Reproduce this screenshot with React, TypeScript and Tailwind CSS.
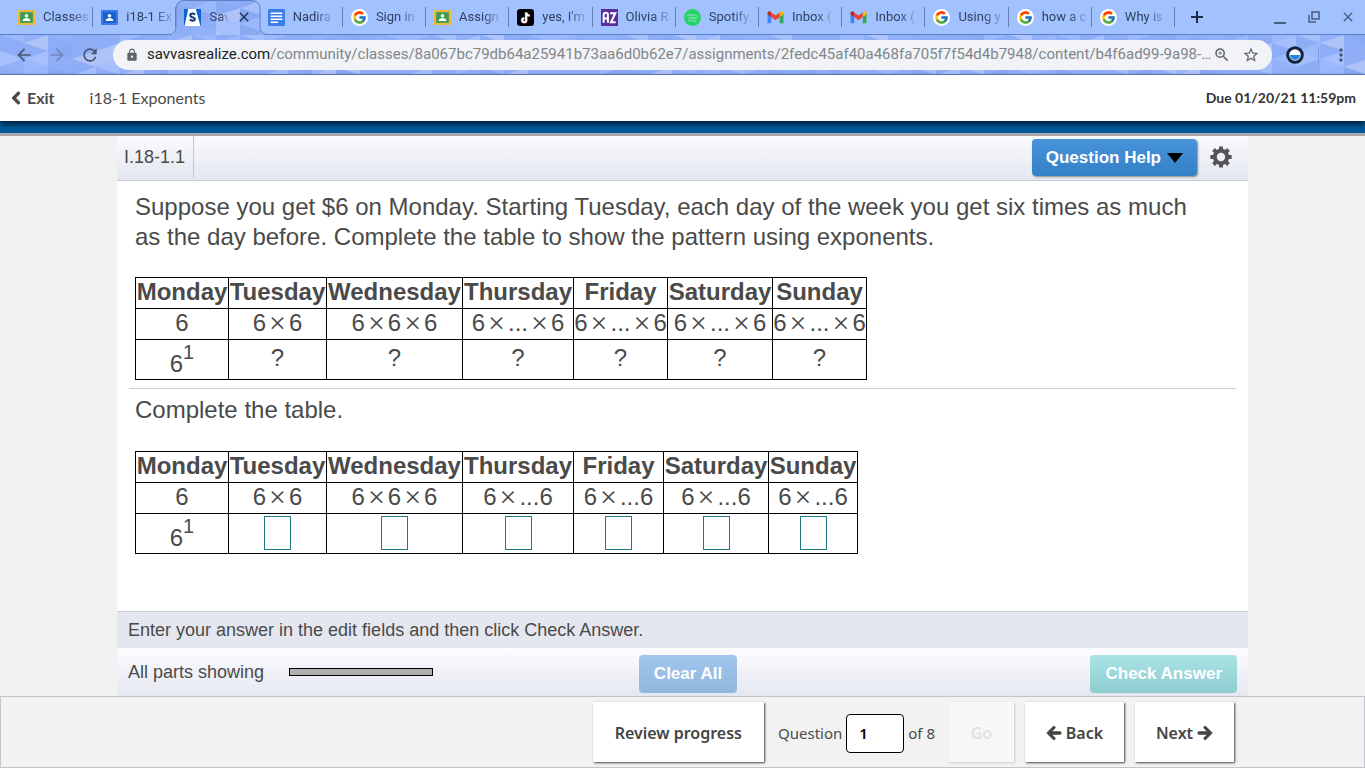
// src/App.tsx
import React from "react";
import { FaArrowLeft, FaArrowRight, FaChevronLeft } from "react-icons/fa";
import { FcGoogle } from "react-icons/fc";
import {
  MdArrowBack,
  MdArrowForward,
  MdClose,
  MdLock,
  MdMoreVert,
  MdOutlineZoomIn,
  MdRefresh,
  MdStarBorder,
} from "react-icons/md";

type Kind = "classroom" | "roster" | "savvas" | "docs" | "google" | "tiktok" | "az" | "spotify" | "gmail";

const TABS: { kind: Kind; title: string; active?: boolean }[] = [
  { kind: "classroom", title: "Classes" },
  { kind: "roster", title: "i18-1 Ex" },
  { kind: "savvas", title: "Sav", active: true },
  { kind: "docs", title: "Nadira" },
  { kind: "google", title: "Sign in" },
  { kind: "classroom", title: "Assign" },
  { kind: "tiktok", title: "yes, I'm" },
  { kind: "az", title: "Olivia R" },
  { kind: "spotify", title: "Spotify" },
  { kind: "gmail", title: "Inbox (" },
  { kind: "gmail", title: "Inbox (" },
  { kind: "google", title: "Using y" },
  { kind: "google", title: "how a c" },
  { kind: "google", title: "Why is" },
];

const DAYS = ["Monday", "Tuesday", "Wednesday", "Thursday", "Friday", "Saturday", "Sunday"];

// Favicons, all on a 16x16 grid
function Favicon({ kind }: { kind: Kind }) {
  if (kind === "google") {
    return (
      <span className="flex size-[17px] shrink-0 items-center justify-center rounded-full bg-white">
        <FcGoogle className="size-[15px]" />
      </span>
    );
  }
  return (
    <svg viewBox="0 0 16 16" className="size-[17px] shrink-0" aria-hidden="true">
      {(kind === "classroom" || kind === "roster") && (
        <>
          <rect y="1" width="16" height="14" rx="1" fill={kind === "roster" ? "#3b7be6" : "#e9ba3a"} />
          <rect x="2" y="3" width="12" height="10" fill={kind === "roster" ? "#1b5fd0" : "#3f9a56"} />
          <circle cx="8" cy="6.4" r="1.7" fill="#fff" />
          <path d="M4.4 11.2c0-1.9 1.8-2.7 3.6-2.7s3.6.8 3.6 2.7z" fill="#fff" />
        </>
      )}
      {kind === "savvas" && (
        <>
          <path d="M0 0h16v16H0z" fill="#0a64d2" />
          <path d="M4 0h7l4.500 16H.5z" fill="#fff" />
          <path
            d="M10.400 5.200C9.600 4.500 8.500 4.200 7.600 4.300 5.300 4.500 5.200 6.900 7.300 7.500c2.300.6 3.200.9 2.900 2.300-.4 1.500-3.200 1.500-4.700.1"
            fill="none"
            stroke="#14387f"
            strokeWidth="2"
          />
        </>
      )}
      {kind === "docs" && (
        <>
          <rect width="16" height="16" rx="1.500" fill="#3c7de8" />
          <path d="M2.500 4h11M2.500 6.800h11M2.500 9.600h11M2.500 12.400h7" stroke="#fff" strokeWidth="1.500" />
        </>
      )}
      {kind === "tiktok" && (
        <>
          <rect width="16" height="16" rx="3" fill="#000" />
          <path
            d="M8.200 3v7.400a1.900 1.900 0 1 1-1.900-1.900M8.200 3.200c.3 1.800 1.500 2.700 3.200 2.800"
            fill="none"
            stroke="#25f4ee"
            strokeWidth="1.700"
          />
          <path
            d="M9.200 3.500v7.400A1.900 1.900 0 1 1 7.300 9M9.200 3.700c.3 1.800 1.500 2.700 3.200 2.800"
            fill="none"
            stroke="#fe2c55"
            strokeWidth="1.700"
          />
          <path
            d="M8.700 3.200v7.400a1.900 1.900 0 1 1-1.900-1.900M8.700 3.400c.3 1.800 1.500 2.700 3.200 2.800"
            fill="none"
            stroke="#fff"
            strokeWidth="1.700"
          />
        </>
      )}
      {kind === "az" && (
        <>
          <rect width="16" height="16" fill="#5b2d9c" />
          <path
            d="M2.500 13V5.500q0-2 2-2t2 2V13M2.500 9h4M8.500 4h5L9.400 12.500h4.400"
            fill="none"
            stroke="#fff"
            strokeWidth="1.900"
          />
        </>
      )}
      {kind === "spotify" && (
        <>
          <circle cx="8" cy="8" r="8" fill="#25d366" />
          <path
            d="M3.500 6c3-.9 6.300-.6 9 .8M4 8.600c2.600-.7 5.200-.4 7.600.8M4.500 11c2.200-.5 4.200-.3 6.200.8"
            fill="none"
            stroke="#7fdcae"
            strokeWidth="1.300"
            strokeLinecap="round"
          />
        </>
      )}
      {kind === "gmail" && (
        <>
          <path d="M.5 4v9.500H4V6z" fill="#4285f4" />
          <path d="M15.500 4v9.500H12V6z" fill="#34a853" />
          <path d="M12 3.500v4l3.500-2.600V4c0-1.700-1.800-2.300-2.800-1.400z" fill="#fbbc04" />
          <path d="M.5 4.900V4C.5 2.300 2.300 1.700 3.300 2.600L4 3.200v4.300z" fill="#c5221f" />
          <path d="M4 3.200l4 3 4-3v4.300l-4 3-4-3z" fill="#ea4335" />
        </>
      )}
    </svg>
  );
}

const SHADES = ["#8faef6", "#9bb8fd", "#8aa9f3", "#a6bffd", "#93b1f9", "#b0c3f9", "#8daef6"];

// Triangle mosaic of the browser theme
function Mosaic({ seed = 0 }: { seed?: number }) {
  const shapes: React.ReactNode[] = [];
  for (let c = 0; c < 62; c++) {
    for (let r = -1; r < 4; r++) {
      const x = c * 24;
      const y = r * 16 + (c % 2) * 8;
      const k = (c * 7 + r * 11 + seed + ((c * r * 5) % 6) + 20) % SHADES.length;
      const j = (c * 3 + r * 5 + seed + ((c * c) % 5) + 20) % SHADES.length;
      shapes.push(
        <path key={`a${c}.${r}`} d={`M${x} ${y}l24 8l-24 8z`} fill={SHADES[k]} />,
        <path key={`b${c}.${r}`} d={`M${x + 24} ${y + 8}v16l-24-8z`} fill={SHADES[j]} />,
      );
    }
  }
  return <>{shapes}</>;
}

function Tab({ kind, title, active }: { kind: Kind; title: string; active?: boolean }) {
  return (
    <div className="relative flex h-[34px] min-w-0 flex-1 items-center gap-2 pl-2 pr-1">
      {active && (
        <svg viewBox="0 0 101 35" className="absolute -left-2 top-0 z-10 h-[35px] w-[101px]" aria-hidden="true">
          <defs>
            <clipPath id="tab-shape">
              <path d="M0 35C5 35 8 32 8 26V9Q8 0 17 0H83Q92 0 92 9V26C92 32 95 35 101 35z" />
            </clipPath>
          </defs>
          <g clipPath="url(#tab-shape)">
            <Mosaic seed={3} />
          </g>
          <path
            d="M0 34.500C5 34.500 8 32 8 26V9Q8 .5 17 .5H83Q92 .5 92 9V26C92 32 95 34.500 101 34.500"
            fill="none"
            stroke="#5c7fc9"
          />
        </svg>
      )}
      <span className="relative z-20 flex shrink-0">
        <Favicon kind={kind} />
      </span>
      <a
        href="#"
        className="relative z-20 min-w-0 whitespace-nowrap text-[13px] text-[#30415f] [mask-image:linear-gradient(to_right,black_60%,transparent_110%)]"
      >
        {title}
      </a>
      {active ? (
        <button aria-label="Close tab" className="relative z-20 ml-auto mr-1 shrink-0 text-[#1f2c46]">
          <MdClose className="size-4" />
        </button>
      ) : (
        <span className="absolute right-0 top-[7px] h-5 w-px bg-[#667fb3]" />
      )}
    </div>
  );
}

function BrowserChrome() {
  return (
    <div className="font-[Roboto,sans-serif]">
      <div className="flex h-[34px] bg-[#a2c2ff]">
        <div className="flex min-w-0 flex-1 pl-[10px]">
          {TABS.map((t, i) => (
            <Tab key={i} {...t} />
          ))}
        </div>
        <div className="flex w-[190px] items-center justify-between pl-3 pr-[9px] text-[#4b5c80]">
          <button aria-label="New tab" className="text-[#1f2c46]">
            <svg viewBox="0 0 20 20" className="size-5" stroke="currentColor" strokeWidth="2">
              <path d="M10 4v12M4 10h12" />
            </svg>
          </button>
          <div className="flex items-center gap-[18px]">
            <button aria-label="Minimize">
              <svg viewBox="0 0 16 16" className="size-4" stroke="currentColor" strokeWidth="2">
                <path d="M2 14h12" />
              </svg>
            </button>
            <button aria-label="Restore">
              <svg viewBox="0 0 16 16" className="size-4" fill="none" stroke="currentColor" strokeWidth="1.500">
                <path d="M6 3h7v7H6zM3 6v7h7" />
              </svg>
            </button>
            <button aria-label="Close window">
              <MdClose className="size-4" />
            </button>
          </div>
        </div>
      </div>
      <div className="relative h-[41px] overflow-hidden border-y border-[#5c7fc9] bg-[#8fadf7]">
        <svg
          viewBox="0 0 1365 40"
          preserveAspectRatio="xMinYMin slice"
          className="absolute inset-0 size-full"
          aria-hidden="true"
        >
          <Mosaic />
        </svg>
        <div className="relative flex h-full items-center text-[#4a5673]">
          <div className="flex items-center gap-[13px] pl-[14px]">
            <button aria-label="Back">
              <MdArrowBack className="size-5" />
            </button>
            <button aria-label="Forward" className="text-[#7188bd]">
              <MdArrowForward className="size-5" />
            </button>
            <button aria-label="Reload">
              <MdRefresh className="size-5" />
            </button>
          </div>
          <div className="ml-[13px] flex h-[30px] min-w-0 flex-1 items-center rounded-full bg-[#f1f3f6] px-3 text-[#5f6368]">
            <MdLock className="size-[14px] shrink-0" />
            <div className="ml-2 min-w-0 flex-1 whitespace-nowrap text-[15px] text-[#80868b]">
              <span className="text-[#202124]">savvasrealize.com</span>
              /community/classes/8a067bc79db64a25941b73aa6d0b62e7/assignments/2fedc45af40a468fa705f7f54d4b7948/content/b4f6ad99-9a98-…
            </div>
            <button aria-label="Zoom">
              <MdOutlineZoomIn className="size-[18px]" />
            </button>
            <button aria-label="Bookmark" className="ml-[11px]">
              <MdStarBorder className="size-[18px]" />
            </button>
          </div>
          <div className="flex w-[93px] items-center pl-[14px]">
            <svg viewBox="0 0 18 18" className="size-[18px]" aria-hidden="true">
              <circle cx="9" cy="9" r="7.300" fill="#fff" stroke="#10233f" strokeWidth="3" />
              <path d="M4 9h10a5 5 0 0 1-10 0z" fill="#1e88e5" />
            </svg>
            <span className="ml-[14px] h-4 w-px bg-[#7f9be0]" />
            <button aria-label="Menu" className="ml-[12px]">
              <MdMoreVert className="size-5" />
            </button>
          </div>
        </div>
      </div>
    </div>
  );
}

function Gear() {
  return (
    <svg viewBox="0 0 22 22" className="size-[22px]" fill="none" stroke="currentColor" aria-hidden="true">
      <circle cx="11" cy="11" r="6.200" strokeWidth="4" />
      {[0, 45, 90, 135].map((a) => (
        <path key={a} d="M11 .4v3.800M11 17.800v3.800" strokeWidth="4" transform={`rotate(${a} 11 11)`} />
      ))}
    </svg>
  );
}

function Times() {
  return <span className="px-[3px] align-[-2px] font-['Liberation_Serif',serif] text-[30px] leading-[0]">×</span>;
}

const cell = "h-[31px] border border-black p-0 pb-0.5 text-center leading-[28px] whitespace-nowrap";

// cells come as strings, "x" stands for the multiplication sign
function Product({ parts }: { parts: string }) {
  return (
    <>
      {parts.split(" ").map((p, i) => (p === "x" ? <Times key={i} /> : <span key={i}>{p}</span>))}
    </>
  );
}

function DaysTable({
  products,
  label,
  cols,
  children,
}: {
  products: string[];
  label: string;
  cols: string[];
  children: React.ReactNode;
}) {
  return (
    <table aria-label={label} className="w-px table-fixed border-collapse border border-black">
      <colgroup>
        {cols.map((w, i) => (
          <col key={i} className={w} />
        ))}
      </colgroup>
      <thead>
        <tr>
          {DAYS.map((d) => (
            <th key={d} scope="col" className={`${cell} font-bold`}>
              {d}
            </th>
          ))}
        </tr>
      </thead>
      <tbody>
        <tr>
          {products.map((p, i) => (
            <td key={i} className={cell}>
              <Product parts={p} />
            </td>
          ))}
        </tr>
        <tr>
          <td className="h-10 border border-black p-0 pt-2 text-center leading-none">
            6<sup className="-top-[13px] text-xl leading-none">1</sup>
          </td>
          {children}
        </tr>
      </tbody>
    </table>
  );
}

const navButton =
  "flex h-[60px] items-center justify-center gap-1 bg-white pt-0.5 font-semibold text-[#444] shadow-[1px_1px_2px_#444]";

export default function App() {
  const dots = "6 x ... x 6";
  const dotsShort = "6 x ...6";
  return (
    <div className="flex min-h-screen flex-col bg-[#f2f2f2] font-['Liberation_Sans',Arial,sans-serif] text-[#4a4a4a]">
      <BrowserChrome />

      <header className="relative z-10 flex h-[46px] items-center bg-white px-[9px] font-[Lato,sans-serif] shadow-[0_3px_6px_rgba(0,0,0,0.7)]">
        <a href="#" className="flex items-center gap-1 text-base font-bold">
          <FaChevronLeft className="size-[14px]" stroke="currentColor" strokeWidth="40" />
          Exit
        </a>
        <h1 className="ml-[35px] text-base">i18-1 Exponents</h1>
        <p className="ml-auto text-sm font-bold text-[#333]">Due 01/20/21 11:59pm</p>
      </header>
      <div className="h-[15px] shrink-0 border-b-[3px] border-[#a9a9a9] bg-[#005a9c]" />

      <main className="mx-auto flex w-full max-w-[1131px] flex-1 flex-col bg-white">
        <div className="flex h-[45px] items-center border-b border-[#c6cdd8] bg-linear-to-b from-[#fafafe] to-[#e4e7ef] pb-0.5">
          <h2 className="flex h-full items-center border-r border-[#c3c6cc] pl-[7px] pr-2 text-[18px]">I.18-1.1</h2>
          <button className="ml-auto flex h-[37px] items-center gap-[6px] rounded bg-linear-to-b from-[#4794dc] to-[#3480c6] px-[14px] pt-0.5 text-[17px] font-bold text-white shadow-[1px_1px_2px_#888]">
            Question Help
            <svg viewBox="0 0 16 10" className="h-[10px] w-4" aria-hidden="true">
              <path d="M0 0h16L8 10z" fill="#000" />
            </svg>
          </button>
          <button aria-label="Settings" className="ml-[13px] mr-4 text-[#555]">
            <Gear />
          </button>
        </div>

        <div className="flex-1 px-3 text-2xl">
          <section className="px-[6px] pt-[11px]">
            <p className="mb-[25px] pr-6 leading-[30px]">
              Suppose you get $6 on Monday. Starting Tuesday, each day of the week you get six times as much as the day
              before. Complete the table to show the pattern using exponents.
            </p>
            <DaysTable
              label="Money per day"
              cols={["w-[93px]", "w-[98px]", "w-[136px]", "w-[111px]", "w-[94px]", "w-[105px]", "w-[94px]"]}
              products={["6", "6 x 6", "6 x 6 x 6", dots, dots, dots, dots]}
            >
              {DAYS.slice(1).map((d) => (
                <td key={d} className="border border-black p-0 pb-1 text-center">
                  ?
                </td>
              ))}
            </DaysTable>
          </section>
          <hr className="mt-2 border-[#ccc]" />
          <section className="px-[6px] pt-[6px]">
            <p className="mb-[26px] leading-[30px]">Complete the table.</p>
            <DaysTable
              label="Exponent answers"
              cols={["w-[93px]", "w-[98px]", "w-[136px]", "w-[111px]", "w-[90px]", "w-[105px]", "w-[89px]"]}
              products={["6", "6 x 6", "6 x 6 x 6", dotsShort, dotsShort, dotsShort, dotsShort]}
            >
              {DAYS.slice(1).map((d) => (
                <td key={d} className="border border-black p-0 pb-0.5 text-center">
                  <input aria-label={d} className="mx-auto block h-[34px] w-[27px] border border-[#1d7a85] text-center" />
                </td>
              ))}
            </DaysTable>
          </section>
        </div>

        <p className="flex h-[37px] items-center border-t border-[#c6cdd8] bg-[#e4e7ef] px-[11px] text-[18px]">
          Enter your answer in the edit fields and then click Check Answer.
        </p>
        <div className="grid h-12 grid-cols-[34fr_33fr_33fr] items-center bg-linear-to-b from-[#fcfcff] to-[#e6e8f1] px-[11px]">
          <div className="flex items-center gap-[25px] text-[18px]">
            All parts showing
            <span className="h-2 w-36 border border-black bg-[#b0b0b0]" />
          </div>
          <button className="mt-1 h-[38px] justify-self-center rounded bg-linear-to-b from-[#a1c6ee] to-[#90b7de] px-[15px] text-[17px] font-bold text-white">
            Clear All
          </button>
          <button className="mt-1 h-[38px] justify-self-end rounded bg-linear-to-b from-[#a9e3e6] to-[#8fcdd0] px-[15px] text-[17px] font-bold text-white">
            Check Answer
          </button>
        </div>
      </main>

      <footer className="h-[72px] border border-[#c4c4c8] font-['Noto_Sans',sans-serif]">
        <div className="mx-auto flex max-w-[1105px] items-center justify-end gap-[11px] pr-px pt-[5px] text-base">
          <button className={`${navButton} px-[22px]`}>Review progress</button>
          <label className="flex items-center gap-1 px-[3px] pt-0.5 text-[15px]">
            Question
            <input
              defaultValue="1"
              className="h-[39px] w-[58px] rounded border border-black bg-white px-3 font-semibold text-black"
            />
            of 8
          </label>
          <button
            disabled
            className="flex h-[60px] w-[65px] items-center justify-center bg-[#f7f7f7] pt-0.5 font-semibold text-[#e2e2e2] shadow-[1px_1px_2px_#ccc]"
          >
            Go
          </button>
          <button className={`${navButton} w-[99px]`}>
            <FaArrowLeft className="size-4" stroke="currentColor" strokeWidth="30" />
            Back
          </button>
          <button className={`${navButton} w-[99px]`}>
            Next
            <FaArrowRight className="size-4" stroke="currentColor" strokeWidth="30" />
          </button>
        </div>
      </footer>
    </div>
  );
}
